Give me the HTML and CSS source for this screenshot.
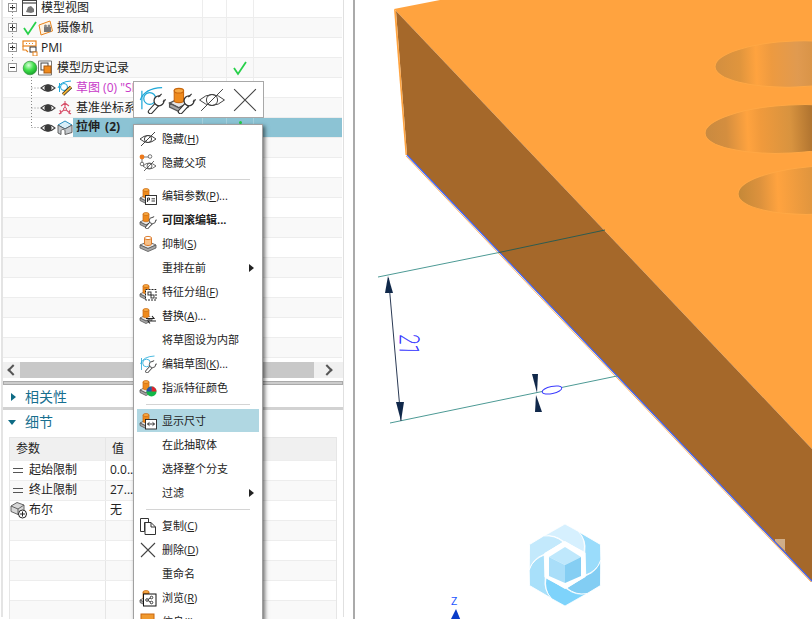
FILE: index.html
```html
<!DOCTYPE html>
<html lang="zh">
<head>
<meta charset="utf-8">
<title>模型历史记录</title>
<link rel="stylesheet" href="styles.css">
</head>
<body>
<svg class="defs" width="0" height="0">
  <defs>
    <radialGradient id="g-ball" cx=".4" cy=".3" r=".75"><stop offset="0" stop-color="#d8ffd8"/><stop offset=".5" stop-color="#3fe04a"/><stop offset="1" stop-color="#149a28"/></radialGradient>
    <linearGradient id="h1" gradientUnits="userSpaceOnUse" x1="716" x2="812" y1="0" y2="0"><stop offset="0" stop-color="#d38f40"/><stop offset=".25" stop-color="#e0953d"/><stop offset=".42" stop-color="#ffa33f"/><stop offset=".58" stop-color="#ed9a40"/><stop offset=".85" stop-color="#e09a50"/><stop offset="1" stop-color="#d99448"/></linearGradient>
    <linearGradient id="h2" gradientUnits="userSpaceOnUse" x1="705" x2="812" y1="0" y2="0"><stop offset="0" stop-color="#c98a40"/><stop offset=".2" stop-color="#d48e3f"/><stop offset=".4" stop-color="#ffa33f"/><stop offset=".52" stop-color="#f09a3c"/><stop offset=".8" stop-color="#d8933f"/><stop offset="1" stop-color="#b07430"/></linearGradient>
    <linearGradient id="h3" gradientUnits="userSpaceOnUse" x1="738" x2="812" y1="0" y2="0"><stop offset="0" stop-color="#c48838"/><stop offset=".3" stop-color="#dd923d"/><stop offset=".54" stop-color="#ffa33f"/><stop offset="1" stop-color="#e0953e"/></linearGradient>

    <symbol id="eye" viewBox="0 0 16 16"><path d="M1 8Q8 1.5 15 8Q8 14.5 1 8Z" fill="#fff" stroke="#444" stroke-width="1.1"/><circle cx="8" cy="8" r="3.6" fill="#3a3a3a"/></symbol>
    <symbol id="eyeoff" viewBox="0 0 18 18"><path d="M1 9Q9 2 17 9Q9 16 1 9Z" fill="none" stroke="#444" stroke-width="1" vector-effect="non-scaling-stroke"/><circle cx="9" cy="9" r="3.6" fill="none" stroke="#444" stroke-width="1" vector-effect="non-scaling-stroke"/><path d="M2 16L16 2" stroke="#444" stroke-width="1" vector-effect="non-scaling-stroke"/></symbol>
    <symbol id="cross" viewBox="0 0 18 18"><path d="M2 2L16 16M16 2L2 16" stroke="#444" stroke-width="1.1" vector-effect="non-scaling-stroke"/></symbol>
    <symbol id="base" viewBox="0 0 18 18"><path d="M1 11L7 8L13 11L7 14Z" fill="#e6e6e6" stroke="#555" stroke-width=".8"/><path d="M1 11v2.5l6 3 6-3V11l-6 3z" fill="#a8a8a8" stroke="#555" stroke-width=".8"/><path d="M4 3v6.5c0 1.6 6 1.6 6 0V3z" fill="#ee8a1c" stroke="#c9670e" stroke-width=".7"/><ellipse cx="7" cy="3" rx="3" ry="1.5" fill="#f8a943" stroke="#c9670e" stroke-width=".7"/></symbol>
    <symbol id="wrench" viewBox="0 0 18 18"><path d="M8 16.500L13 11" stroke="#333" stroke-width="3.400" stroke-linecap="round"/><path d="M8 16.500L13 11" stroke="#fff" stroke-width="2" stroke-linecap="round"/><circle cx="13.500" cy="9.500" r="3.200" fill="#fff" stroke="#333" stroke-width=".8"/><path d="M14 9L18 5.500" stroke="#fff" stroke-width="3"/><path d="M13 7.200L15.200 5M16 10.400L18 8.600" stroke="#333" stroke-width=".7"/></symbol>
    <symbol id="sk-arc" viewBox="0 0 18 18"><path d="M1.500 9Q4 1.500 15.500 1" fill="none" stroke="#1fa8d8" stroke-width=".8"/><path d="M2.500 3V15" stroke="#1fa8d8" stroke-width=".8" fill="none"/><circle cx="7.500" cy="8" r="3.800" fill="none" stroke="#1fa8d8" stroke-width=".8"/></symbol>

    <symbol id="i-parent" viewBox="0 0 18 18"><circle cx="3" cy="3" r="2.400" fill="#ee7a1c"/><circle cx="11" cy="2.500" r="1.800" fill="#fff" stroke="#555" stroke-width=".8"/><circle cx="3" cy="10" r="1.800" fill="#fff" stroke="#555" stroke-width=".8"/><path d="M5 3h4.500M3 5v3.500" stroke="#555" stroke-width=".8"/><path d="M4 12Q10 6 17 12Q10 18 4 12Z" fill="#fff" stroke="#444" stroke-width=".8"/><circle cx="10.500" cy="12" r="2.500" fill="none" stroke="#444" stroke-width=".8"/><path d="M5 17L15 7" stroke="#444" stroke-width=".8"/></symbol>
    <symbol id="i-param" viewBox="0 0 18 18"><use href="#base" width="18" height="18"/><rect x="6.500" y="8.500" width="11" height="9" fill="#fff" stroke="#222" stroke-width=".9"/><path d="M8.500 15V11h2v2h-2M12.500 11.800h3.500M12.500 14h3.500" fill="none" stroke="#222" stroke-width=".9"/></symbol>
    <symbol id="i-rollback" viewBox="0 0 18 18"><use href="#base" width="18" height="18"/><use href="#wrench" width="18" height="18"/></symbol>
    <symbol id="i-suppress" viewBox="0 0 18 18"><path d="M1 10L9 6.500L17 10L9 13.500Z" fill="#e6e6e6" stroke="#555" stroke-width=".8"/><path d="M1 10v3l8 3.500 8-3.500v-3l-8 3.500z" fill="#a8a8a8" stroke="#555" stroke-width=".8"/><path d="M5.500 3v6c0 2 7 2 7 0V3z" fill="#f6c088" stroke="#d9701a" stroke-width=".9"/><ellipse cx="9" cy="3" rx="3.500" ry="1.600" fill="#fff" stroke="#d9701a" stroke-width=".9"/></symbol>
    <symbol id="i-group" viewBox="0 0 18 18"><use href="#base" width="18" height="18"/><rect x="6.500" y="6.500" width="10.500" height="10.500" fill="#fff" stroke="#222" stroke-dasharray="2 1"/><rect x="9" y="9" width="3" height="3" fill="none" stroke="#222" stroke-width=".9"/><rect x="12" y="12" width="3" height="3" fill="none" stroke="#222" stroke-width=".9"/></symbol>
    <symbol id="i-swap" viewBox="0 0 18 18"><use href="#base" width="18" height="18"/><path d="M7 11.500h8l-2-2.500M17 14H9l2 2.500" fill="#fff" stroke="#222" stroke-width="1.100"/></symbol>
    <symbol id="i-sketch" viewBox="0 0 18 18"><use href="#sk-arc" width="18" height="18"/><use href="#wrench" width="18" height="18"/></symbol>
    <symbol id="i-color" viewBox="0 0 18 18"><use href="#base" width="18" height="18"/><circle cx="12.500" cy="12.500" r="5" fill="#12b848"/><path d="M12.500 12.500V7.500A5 5 0 0 1 17.500 12.500Z" fill="#e02030"/><path d="M12.500 12.500H7.500A5 5 0 0 1 12.500 7.500Z" fill="#2a50a8"/></symbol>
    <symbol id="i-dim" viewBox="0 0 18 18"><use href="#base" width="18" height="18"/><rect x="6.500" y="7.500" width="11" height="9.500" fill="#fff" stroke="#222" stroke-width=".9"/><path d="M8.500 12h7M10.500 10.300L8.500 12l2 1.700M13.500 10.300l2 1.700-2 1.700" fill="none" stroke="#222" stroke-width=".9"/></symbol>
    <symbol id="i-copy" viewBox="0 0 18 18"><path d="M1.500 1.500h8v4h-4v9h-4z" fill="#fff" stroke="#333"/><path d="M6 5.500h6l4.500 4.500v7.500H6z" fill="#fff" stroke="#333"/><path d="M12 5.500V10h4.500" fill="none" stroke="#333"/></symbol>
    <symbol id="i-browse" viewBox="0 0 18 18"><use href="#base" width="18" height="18"/><rect x="4.500" y="5" width="12.500" height="12" fill="#fff" stroke="#111"/><circle cx="8" cy="11" r="1.300" fill="none" stroke="#111" stroke-width=".8"/><circle cx="12.500" cy="8.500" r="1.300" fill="none" stroke="#111" stroke-width=".8"/><circle cx="12.500" cy="13.500" r="1.300" fill="none" stroke="#111" stroke-width=".8"/><path d="M9 10.400l2.400-1.300M9 11.600l2.400 1.300" stroke="#111" stroke-width=".8"/></symbol>
    <symbol id="i-attr" viewBox="0 0 18 18"><rect x="2" y="1" width="13" height="17" fill="#f09a30" stroke="#c9670e"/></symbol>

    <symbol id="t-view" viewBox="0 0 16 16"><rect x=".5" y=".5" width="14" height="15" fill="#fff" stroke="#444"/><path d="M1 3h13" stroke="#444" stroke-width="1.200"/><path d="M4 12l2-5 3-1 3 3 0 3-3 1z" fill="#777"/></symbol>
    <symbol id="t-tick" viewBox="0 0 16 16"><path d="M2 8l4 6 8-12" fill="none" stroke="#27d04a" stroke-width="1.800"/></symbol>
    <symbol id="t-cam" viewBox="0 0 16 16"><path d="M1 5L12 1L14.500 11L3 15Z" fill="#fff3e0" stroke="#e8831c"/><rect x="6" y="7" width="7" height="5" fill="#777"/><circle cx="7.500" cy="6" r="1.500" fill="#888"/><circle cx="11" cy="6" r="1.500" fill="#888"/></symbol>
    <symbol id="t-pmi" viewBox="0 0 16 16"><rect x="1" y="1" width="13" height="5" fill="#fff" stroke="#e8831c" stroke-width="1.200"/><path d="M4 3.500h1M7 3.500h1M10 3.500h1" stroke="#e8831c"/><rect x="8" y="7" width="6" height="5" fill="#fff" stroke="#333"/><path d="M1 6v4h3l2 2" fill="none" stroke="#e8831c" stroke-width="1.100"/><rect x="11" y="12" width="4" height="4" fill="#fff" stroke="#e8831c"/></symbol>
    <symbol id="t-ball" viewBox="0 0 16 16"><circle cx="8" cy="8" r="6.800" fill="url(#g-ball)" stroke="#2f8f3a" stroke-width=".7"/></symbol>
    <symbol id="t-hist" viewBox="0 0 16 16"><path d="M.5 1h13v14H.5z" fill="#fff" stroke="#777"/><rect x="3" y="3" width="7" height="7" fill="#fff" stroke="#444"/><rect x="6" y="6" width="7" height="7" fill="#f08a1c" stroke="#a85a10"/></symbol>
    <symbol id="t-sketch" viewBox="0 0 16 16"><path d="M1 8Q3 1.500 14 1" fill="none" stroke="#1fa8d8"/><path d="M2.500 3V12" stroke="#1fa8d8"/><circle cx="7" cy="7" r="3.500" fill="none" stroke="#1fa8d8"/><path d="M6 14.500L14 7" stroke="#222" stroke-width="3.200"/><path d="M6 14.500L14 7" stroke="#f2b233" stroke-width="1.800"/></symbol>
    <symbol id="t-datum" viewBox="0 0 16 16"><path d="M8 1v8M8 9L2 14M8 9l6 5M4 6L8 3l4 3M3 10l1 4M13 10l-1 4" fill="none" stroke="#d8506a" stroke-width="1.100"/><circle cx="8" cy="9" r="1.500" fill="#fff" stroke="#d8506a"/></symbol>
    <symbol id="t-extrude" viewBox="0 0 16 16"><path d="M1 5L8 1l7 4-7 4z" fill="#d8eef8" stroke="#2a90c0"/><path d="M1 5v8l3 1.500V11c0-2 4-2 4 0v3.500l7-2V5L8 9z" fill="#c4c8cc" stroke="#555" stroke-width=".9"/></symbol>
    <symbol id="t-bool" viewBox="0 0 18 18"><path d="M1 5l6-3.500 7 2.500v6l-6 3.500-7-3z" fill="#d8d8d8" stroke="#555" stroke-width=".9"/><path d="M1 5l7 3 6-4M8 8v5.500" fill="none" stroke="#555" stroke-width=".9"/><circle cx="12.500" cy="13" r="4" fill="#fff" stroke="#222"/><path d="M12.500 10.500v5M10 13h5" stroke="#222"/></symbol>
  </defs>
</svg>

<div class="app">
  <aside class="side">
    <div class="panels">
      <div class="tree">
        <div class="row"><div class="name ind-a"><span class="exp plus"></span><svg class="ic"><use href="#t-view"/></svg><span class="lab">模型视图</span></div><i class="c1"></i><i class="c2"></i><i class="c3"></i></div>
        <div class="row"><div class="name ind-a"><span class="exp plus"></span><svg class="ic"><use href="#t-tick"/></svg><svg class="ic"><use href="#t-cam"/></svg><span class="lab">摄像机</span></div><i class="c1"></i><i class="c2"></i><i class="c3"></i></div>
        <div class="row"><div class="name ind-a"><span class="exp plus"></span><svg class="ic"><use href="#t-pmi"/></svg><span class="lab">PMI</span></div><i class="c1"></i><i class="c2"></i><i class="c3"></i></div>
        <div class="row"><div class="name ind-a"><span class="exp minus"></span><svg class="ic"><use href="#t-ball"/></svg><svg class="ic"><use href="#t-hist"/></svg><span class="lab">模型历史记录</span></div><i class="c1"></i><i class="c2"><svg class="tick"><use href="#t-tick"/></svg></i><i class="c3"></i></div>
        <div class="row"><div class="name ind-b"><svg class="ic"><use href="#eye"/></svg><svg class="ic ic-gap"><use href="#t-sketch"/></svg><span class="lab sketch">草图 (0) "SKETCH_000"</span></div><i class="c1"></i><i class="c2"></i><i class="c3"></i></div>
        <div class="row"><div class="name ind-b"><svg class="ic"><use href="#eye"/></svg><svg class="ic ic-gap"><use href="#t-datum"/></svg><span class="lab">基准坐标系 (1)</span></div><i class="c1"></i><i class="c2"></i><i class="c3"></i></div>
        <div class="row"><div class="name ind-b"><svg class="ic"><use href="#eye"/></svg><svg class="ic ic-gap"><use href="#t-extrude"/></svg><span class="lab sel">拉伸 (2)</span></div><i class="c1 selc"><span class="tiny">5</span></i><i class="c2 selc"><span class="dot"></span></i><i class="c3 selc"></i></div>
        <div class="row"><div class="name"></div><i class="c1"></i><i class="c2"></i><i class="c3"></i></div>
        <div class="row"><div class="name"></div><i class="c1"></i><i class="c2"></i><i class="c3"></i></div>
        <div class="row"><div class="name"></div><i class="c1"></i><i class="c2"></i><i class="c3"></i></div>
        <div class="row"><div class="name"></div><i class="c1"></i><i class="c2"></i><i class="c3"></i></div>
        <div class="row"><div class="name"></div><i class="c1"></i><i class="c2"></i><i class="c3"></i></div>
        <div class="row"><div class="name"></div><i class="c1"></i><i class="c2"></i><i class="c3"></i></div>
        <div class="row"><div class="name"></div><i class="c1"></i><i class="c2"></i><i class="c3"></i></div>
        <div class="row"><div class="name"></div><i class="c1"></i><i class="c2"></i><i class="c3"></i></div>
        <div class="row"><div class="name"></div><i class="c1"></i><i class="c2"></i><i class="c3"></i></div>
        <div class="row"><div class="name"></div><i class="c1"></i><i class="c2"></i><i class="c3"></i></div>
        <div class="row"><div class="name"></div><i class="c1"></i><i class="c2"></i><i class="c3"></i></div>
      </div>
      <div class="hscroll"><span class="arr arr-l"></span><span class="thumb"></span><span class="arr arr-r"></span></div>
      <div class="band"></div>
      <div class="sect"><span class="tri-r"></span><span>相关性</span></div>
      <div class="band2"></div>
      <div class="sect sect-d"><span class="tri-d"></span><span>细节</span></div>
      <div class="table">
        <div class="tr th"><div class="td1 pad-h">参数</div><div class="td2">值</div></div>
        <div class="tr"><div class="td1"><span class="eq"></span>起始限制</div><div class="td2">0.0...</div></div>
        <div class="tr"><div class="td1"><span class="eq"></span>终止限制</div><div class="td2">27...</div></div>
        <div class="tr"><div class="td1"><svg class="ic-b"><use href="#t-bool"/></svg>布尔</div><div class="td2">无</div></div>
        <div class="tr"><div class="td1"></div><div class="td2"></div></div>
        <div class="tr"><div class="td1"></div><div class="td2"></div></div>
        <div class="tr"><div class="td1"></div><div class="td2"></div></div>
        <div class="tr"><div class="td1"></div><div class="td2"></div></div>
        <div class="tr"><div class="td1"></div><div class="td2"></div></div>
      </div>
    </div>
  </aside>

  <svg class="view" viewBox="355 0 457 619" width="457" height="619">
    <path d="M394 9L440 0H812V449L396 11Z" fill="#ffa33f"/>
    <path d="M396 11L812 449V582L407 155Z" fill="#a5682a"/>
    <path d="M394 9L396 11L407 155L405.500 155Z" fill="#ffa33f"/>
    <path d="M406 156L811 582" stroke="#ffa33f" stroke-width=".8"/>
    <path d="M407 155L812 581" stroke="#3f66ff" stroke-width="1.200"/>
    <ellipse cx="795" cy="64" rx="80" ry="23" transform="rotate(-2 795 64)" fill="url(#h1)" stroke="#ffa845"/>
    <ellipse cx="790" cy="129" rx="85" ry="24" transform="rotate(-3 790 129)" fill="url(#h2)" stroke="#ffa845"/>
    <ellipse cx="820" cy="190" rx="82" ry="24" transform="rotate(-3 820 190)" fill="url(#h3)" stroke="#ffa845"/>
    <path d="M775 539H785V552H786L775 541Z" fill="#d9bfa3" opacity=".8"/>

    <path d="M378 277L499 252.500" stroke="#4d9a95" stroke-width="1"/>
    <path d="M499 252.500L605 230" stroke="#2e5c50" stroke-width="1"/>
    <path d="M390 423L617 376" stroke="#4d9a95" stroke-width="1"/>
    <path d="M388.500 278L401 421" stroke="#2b3a55" stroke-width="1"/>
    <path d="M388 276L385 293H393Z" fill="#10284a"/>
    <path d="M401 421L396 402H404Z" fill="#10284a"/>
    <path d="M537 393L532 374H538Z" fill="#10284a"/>
    <path d="M536 395L535 412H542Z" fill="#10284a"/>
    <ellipse cx="552" cy="390" rx="10" ry="3.500" transform="rotate(-12 552 390)" fill="#fff" stroke="#3a3aff" stroke-width="1"/>
    <text class="dimtxt" transform="translate(400 334) rotate(91) scale(.7 1)">21</text>

    <g transform="translate(565 565)">
      <g stroke="#fff" stroke-width=".8">
        <path d="M0-41L14.500-33Q21-24 19-13L-2-24Q-11-31-22-28.500Z" fill="#d6f0fe"/>
        <path d="M0-41L14.500-33Q21-24 19-13L-2-24Q-11-31-22-28.500Z" fill="#9adcfb" transform="rotate(60)"/>
        <path d="M0-41L14.500-33Q21-24 19-13L-2-24Q-11-31-22-28.500Z" fill="#82cdf3" transform="rotate(120)"/>
        <path d="M0-41L14.500-33Q21-24 19-13L-2-24Q-11-31-22-28.500Z" fill="#7ed3fb" transform="rotate(180)"/>
        <path d="M0-41L14.500-33Q21-24 19-13L-2-24Q-11-31-22-28.500Z" fill="#a8e0fa" transform="rotate(240)"/>
        <path d="M0-41L14.500-33Q21-24 19-13L-2-24Q-11-31-22-28.500Z" fill="#c3e9fc" transform="rotate(300)"/>
      </g>
      <path d="M0-24L20.500-12V12L0 24L-20.500 12V-12Z" fill="#fff"/>
      <path d="M0-18L16-8L0 0L-16-8Z" fill="#bfe8fc"/>
      <path d="M-16-8L0 0V18L-16 11Z" fill="#a9def9"/>
      <path d="M16-8L0 0V18L16 11Z" fill="#85cef3"/>
    </g>

    <text class="ztxt" x="451" y="605">Z</text>
    <path d="M456 609L450 621H461Z" fill="#0a3cc8"/>
  </svg>

  <svg class="dots" width="60" height="130">
    <path d="M12.500 0V63M12.500 8h5M12.500 28h5M12.500 48h5M31.500 77V127M31.500 88H40M31.500 108H40M31.500 127.500H40" fill="none" stroke="#888" stroke-dasharray="1 2"/>
  </svg>

  <div class="mini">
    <svg class="mini-ic"><use href="#i-sketch"/></svg>
    <svg class="mini-ic"><use href="#i-rollback"/></svg>
    <svg class="mini-ic"><use href="#eyeoff"/></svg>
    <svg class="mini-ic mini-last"><use href="#cross"/></svg>
  </div>

  <div class="menu">
    <div class="mi"><svg class="mic"><use href="#eyeoff"/></svg><span>隐藏(<u>H</u>)</span></div>
    <div class="mi"><svg class="mic"><use href="#i-parent"/></svg><span>隐藏父项</span></div>
    <div class="sep"></div>
    <div class="mi"><svg class="mic"><use href="#i-param"/></svg><span>编辑参数(<u>P</u>)...</span></div>
    <div class="mi"><svg class="mic"><use href="#i-rollback"/></svg><b>可回滚编辑...</b></div>
    <div class="mi"><svg class="mic"><use href="#i-suppress"/></svg><span>抑制(<u>S</u>)</span></div>
    <div class="mi"><span class="mic"></span><span>重排在前</span><span class="sub"></span></div>
    <div class="mi"><svg class="mic"><use href="#i-group"/></svg><span>特征分组(<u>F</u>)</span></div>
    <div class="mi"><svg class="mic"><use href="#i-swap"/></svg><span>替换(<u>A</u>)...</span></div>
    <div class="mi"><span class="mic"></span><span>将草图设为内部</span></div>
    <div class="mi"><svg class="mic"><use href="#i-sketch"/></svg><span>编辑草图(<u>K</u>)...</span></div>
    <div class="mi"><svg class="mic"><use href="#i-color"/></svg><span>指派特征颜色</span></div>
    <div class="sep"></div>
    <div class="mi hot"><svg class="mic"><use href="#i-dim"/></svg><span>显示尺寸</span></div>
    <div class="mi"><span class="mic"></span><span>在此抽取体</span></div>
    <div class="mi"><span class="mic"></span><span>选择整个分支</span></div>
    <div class="mi"><span class="mic"></span><span>过滤</span><span class="sub"></span></div>
    <div class="sep"></div>
    <div class="mi"><svg class="mic"><use href="#i-copy"/></svg><span>复制(<u>C</u>)</span></div>
    <div class="mi"><svg class="mic"><use href="#cross"/></svg><span>删除(<u>D</u>)</span></div>
    <div class="mi"><span class="mic"></span><span>重命名</span></div>
    <div class="mi"><svg class="mic"><use href="#i-browse"/></svg><span>浏览(<u>R</u>)</span></div>
    <div class="mi"><svg class="mic"><use href="#i-attr"/></svg><span>信息(<u>I</u>)</span></div>
  </div>
</div>
</body>
</html>
```
FILE: styles.css
```css
* { box-sizing: border-box; }
html, body { margin: 0; height: 100%; background: #fff; overflow: hidden; }
body { font: 12px/16px "Open Sans", "Noto Sans CJK SC", sans-serif; color: #222; }
.defs { position: absolute; }
.app { position: relative; display: flex; width: 812px; height: 619px; overflow: hidden; }

.side { width: 355px; height: 619px; flex: none; border-right: 2px solid #aaa; overflow: hidden; }
.panels { width: 343px; height: 619px; margin-left: 1px; border-left: 2px solid #e4e4e4; border-right: 1px solid #e0e0e0; }

.tree { height: 364px; margin-top: -2px; padding-right: 1px; overflow: hidden; }
.row { display: flex; height: 20px; border-bottom: 1px solid #ededed; }
.row:nth-child(even) { background: #f9f9f9; }
.name { display: flex; align-items: center; width: 199px; flex: none; white-space: nowrap; overflow: hidden; }
.ind-a { padding-left: 5px; }
.ind-b { padding-left: 37px; }
.c1, .c2, .c3 { display: flex; justify-content: center; position: relative; border-left: 1px solid #ededed; overflow: hidden; }
.c1 { width: 24px; }
.c2 { width: 27px; }
.c3 { flex: 1; }
.exp { position: relative; width: 9px; height: 9px; margin-right: 5px; flex: none; border: 1px solid #999; background: #fff; }
.exp::before { content: ""; position: absolute; left: 1px; top: 3px; width: 5px; height: 1px; background: #222; }
.plus::after { content: ""; position: absolute; left: 3px; top: 1px; width: 1px; height: 5px; background: #222; }
.ic { width: 16px; height: 16px; flex: none; }
.ic-gap { margin-left: 1px; }
.lab { margin-left: 3px; }
.sketch { color: #c838c8; }
.sel { align-self: stretch; flex: 1; margin-left: 0; padding-left: 3px; line-height: 18px; background: #8cc3d4; font-weight: 700; word-spacing: 2px; }
.selc { background: #8cc3d4; border-left-color: #a5d0dd; }
.tick { width: 16px; height: 16px; margin-top: 2px; }
.tiny { font-size: 9px; line-height: 10px; transform: rotate(90deg); }
.dot { width: 3px; height: 3px; margin-top: 3px; border-radius: 50%; background: #22cc44; }

.hscroll { display: flex; align-items: center; height: 16px; background: #f0f0f0; padding-right: 1px; }
.thumb { width: 294px; height: 16px; background: #c8c8c8; }
.arr { width: 17px; display: flex; justify-content: center; flex: none; }
.arr::before { content: ""; width: 6px; height: 6px; border-left: 2px solid #555; border-bottom: 2px solid #555; }
.arr-l::before { transform: rotate(45deg); margin-left: 3px; }
.arr-r { width: 28px; }
.arr-r::before { transform: rotate(225deg); margin-right: 3px; }
.band { height: 4px; margin-top: 3px; background: #ccc; border: 1px solid #aaa; }
.band2 { height: 3px; background: #d2d2d2; }
.sect { display: flex; align-items: center; height: 22px; padding-top: 1px; font-size: 14px; color: #176f8f; }
.sect-d { height: 27px; padding-top: 0; padding-bottom: 3px; }
.tri-r { width: 0; height: 0; margin: 0 9px 0 8px; border: 4px solid transparent; border-left: 5px solid #0e6b85; border-right: 0; }
.tri-d { width: 0; height: 0; margin: 0 9px 0 5px; border: 4px solid transparent; border-top: 5px solid #0e6b85; border-bottom: 0; }

.table { width: 328px; margin-left: 6px; border: 1px solid #e6e6e6; border-bottom: 0; }
.tr { display: flex; height: 20px; line-height: 18px; border-bottom: 1px solid #ededed; }
.tr:nth-child(even) { background: #fff; }
.tr:nth-child(odd) { background: #f9f9f9; }
.tr.th { height: 23px; background: #f0f0f0; line-height: 21px; }
.td1 { display: flex; align-items: center; width: 96px; flex: none; padding-bottom: 1px; border-right: 1px solid #e6e6e6; }
.td2 { padding-left: 4px; }
.pad-h { padding-left: 6px; }
.th .td2 { padding-left: 6px; }
.eq { width: 10px; height: 5px; margin: 0 6px 0 3px; border-top: 1px solid #555; border-bottom: 1px solid #555; flex: none; }
.ic-b { width: 18px; height: 18px; margin-right: 1px; flex: none; }

.view { display: block; flex: none; background: #fff; }
.dimtxt { font: 100 27px Roboto, sans-serif; fill: #2a2aff; stroke: #2a2aff; stroke-width: .5px; }
.ztxt { font: 400 11px "Open Sans", sans-serif; fill: #2255ff; }

.dots { position: absolute; left: 0; top: 0; }

.mini { position: absolute; left: 133px; top: 81px; display: flex; align-items: center; width: 131px; height: 37px; padding-left: 4px; background: #fff; border: 1px solid #a8a8a8; }
.mini-ic { width: 28px; height: 28px; margin-right: 2px; flex: none; }
.mini-last { margin-left: 3px; }

.menu { position: absolute; left: 133px; top: 124px; width: 130px; height: 520px; padding: 2px 3px; background: #fff; border: 1px solid #a0a0a0; box-shadow: 2px 2px 4px rgba(0, 0, 0, .55); font-size: 11px; }
.mi { display: flex; align-items: center; height: 24px; }
.mi b { font-weight: 700; }
.hot { background: #b0d7e2; height: 23px; margin-bottom: 1px; }
.mic { display: block; width: 18px; height: 18px; margin: 0 5px 0 2px; flex: none; }
.sep { height: 9px; padding-top: 4px; margin: 0 9px; }
.sep::before { content: ""; display: block; height: 1px; background: #d4d4d4; }
.sub { width: 0; height: 0; margin-left: auto; margin-right: 5px; border: 4px solid transparent; border-left: 5px solid #222; border-right: 0; }
```
